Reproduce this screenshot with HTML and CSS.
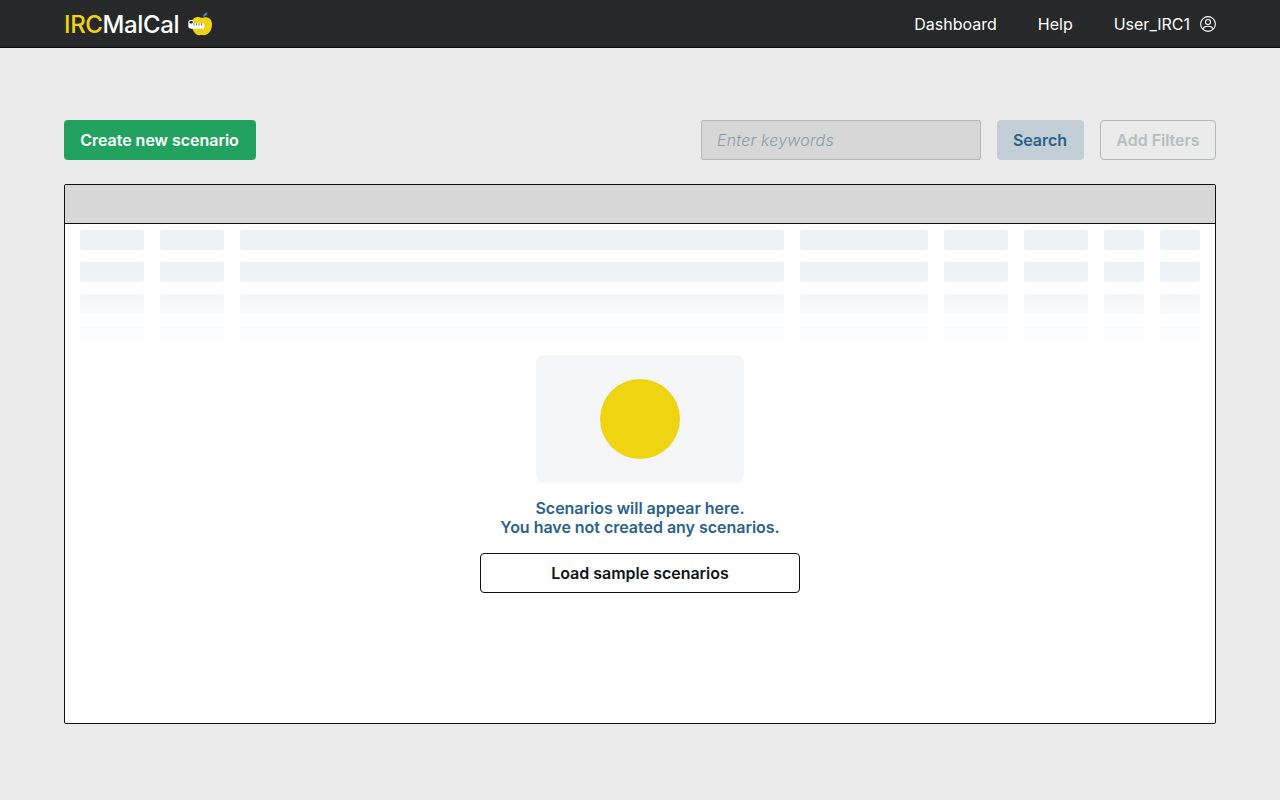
FILE: index.html
```html
<!DOCTYPE html>
<html lang="en">
<head>
<meta charset="utf-8">
<title>IRCMalCal</title>
<link rel="stylesheet" href="styles.css">
</head>
<body>
<header class="topbar">
  <a class="brand"><span class="brand-name"><span class="brand-accent">IRC</span>MalCal</span>
    <svg class="brand-icon" width="24" height="24" viewBox="0 0 24 24" aria-hidden="true">
      <path d="M15 5C15 2.6 16.5 .8 19.4 .2 19.4 2.8 17.9 4.7 15 5Z" fill="#4f7fa8"/>
      <path d="M4 9C5 5.8 8.6 4.4 12.2 5.4 13.3 5.8 14.8 5.8 16 5.4 20.8 4.2 24 7.4 24 12.4 24 18.6 20 23.2 15.5 23.2 14 22.9 12.7 22.9 11.5 23.2 7.6 23.3 4.6 19 4.2 15Z" fill="#efd511"/>
      <path d="M.3 10.2A2.2 2.2 0 0 1 2.5 8H4.2A1.6 1.6 0 0 1 5.8 9.6V11.2H15.2A1 1 0 0 1 16.2 12.2V15.8A1 1 0 0 1 15.2 16.8H3.5A3.2 3.2 0 0 1 .3 13.6Z" fill="#fff"/>
      <rect x="1.4" y="9" width="3.4" height="2.5" rx="1.1" fill="#26282a"/>
      <path d="M6 11.4V13.5M8.5 11.4V13.5M11 11.4V13.5M13.5 11.4V13.5" stroke="#6c6c5c" stroke-width=".9"/>
    </svg>
  </a>
  <nav class="nav">
    <a>Dashboard</a>
    <a>Help</a>
    <a class="user">User_IRC1
      <svg width="16" height="16" viewBox="0 0 16 16" fill="none" stroke="#fff" stroke-width="1.1" aria-hidden="true">
        <circle cx="8" cy="8" r="7.4"/><circle cx="8" cy="6" r="2.5"/>
        <path d="M2.8 13.2C3.5 11 5.5 10.3 8 10.3S12.5 11 13.2 13.2"/>
      </svg>
    </a>
  </nav>
</header>
<main class="content">
  <div class="toolbar">
    <button class="button create">Create new scenario</button>
    <form class="search">
      <input class="keywords" type="text" placeholder="Enter keywords">
      <button class="button find" type="button">Search</button>
      <button class="button filters" type="button">Add Filters</button>
    </form>
  </div>
  <section class="table">
    <div class="table-head"></div>
    <div class="skeleton">
      <i></i><i></i><i></i><i></i><i></i><i></i><i></i><i></i>
      <i></i><i></i><i></i><i></i><i></i><i></i><i></i><i></i>
      <i></i><i></i><i></i><i></i><i></i><i></i><i></i><i></i>
      <i></i><i></i><i></i><i></i><i></i><i></i><i></i><i></i>
    </div>
    <div class="empty">
      <div class="illustration"><div class="dot"></div></div>
      <p class="message">Scenarios will appear here.<br>You have not created any scenarios.</p>
      <button class="button load">Load sample scenarios</button>
    </div>
  </section>
</main>
</body>
</html>
```
FILE: styles.css
```css
* { box-sizing: border-box; }
body {
  margin: 0;
  min-height: 100vh;
  background: #ebebeb;
  font-family: Inter, "Liberation Sans", sans-serif;
  font-size: 16px;
  line-height: 19px;
}
.topbar {
  display: flex;
  align-items: center;
  justify-content: space-between;
  height: 48px;
  padding: 0 64px;
  background: #26282a;
  border-bottom: 1px solid #0b0b10;
  color: #fff;
}
.brand { display: flex; align-items: center; gap: 9px; }
.brand-name { font-size: 24px; line-height: 29px; font-weight: 500; letter-spacing: -0.38px; padding-top: 1px; }
.brand-accent { color: #efd511; }
.nav { display: flex; gap: 41px; padding-top: 1px; }
.user { display: flex; align-items: center; gap: 10px; }
.content { padding: 72px 64px 0; }
.toolbar { display: flex; justify-content: space-between; }
.search { display: flex; gap: 16px; }
.button {
  height: 40px;
  padding: 0 16px;
  border: 0;
  border-radius: 4px;
  font: 600 16px/19px Inter, "Liberation Sans", sans-serif;
  letter-spacing: -0.02px;
  white-space: nowrap;
}
.create { width: 192px; padding: 0 16px 0 15px; background: #21a25f; color: #fff; }
.keywords {
  width: 280px;
  height: 40px;
  padding: 0 15px;
  background: #d7d7d7;
  border: 1px solid #b4bbbb;
  border-radius: 2px;
  font: italic 300 16px/19px Inter, "Liberation Sans", sans-serif;
  letter-spacing: 0.18px;
}
.keywords::placeholder { color: #8b9da4; opacity: 1; }
.find { width: 87px; padding: 0 16px 0 15px; background: #c4ced6; color: #29628b; }
.filters { width: 116px; padding: 0 15px; background: transparent; border: 1px solid #b4bbbb; color: #b7bdbe; }
.table {
  height: 540px;
  margin-top: 24px;
  background: #fff;
  border: 1px solid #0d0f11;
  border-radius: 2px;
  overflow: hidden;
}
.table-head { height: 39px; background: #d7d7d7; border-bottom: 1px solid #0d0f11; }
.skeleton {
  display: grid;
  grid-template-columns: 64px 64px 544px 128px 64px 64px 40px 40px;
  grid-auto-rows: 20px;
  gap: 12px 16px;
  padding: 6px 15px 0;
}
.skeleton i { border-radius: 2px; background: #edf0f4; }
.skeleton i:nth-child(n+9) { background: linear-gradient(#ecf0f5, #f1f3f6); }
.skeleton i:nth-child(n+17) { background: linear-gradient(#f4f6f8, #f9fafb); }
.skeleton i:nth-child(n+25) { background: linear-gradient(#fafbfd, #fff); }
.empty { display: flex; flex-direction: column; align-items: center; padding-top: 9px; }
.illustration { display: grid; place-items: center; width: 208px; height: 128px; border-radius: 8px; background: #f5f6f8; }
.dot { width: 80px; height: 80px; border-radius: 50%; background: #efd511; }
.message { margin: 16px 0; text-align: center; font-weight: 600; letter-spacing: -0.02px; color: #29628b; }
.load { width: 320px; background: #fff; border: 1px solid #0d0f11; color: #111416; }
```
